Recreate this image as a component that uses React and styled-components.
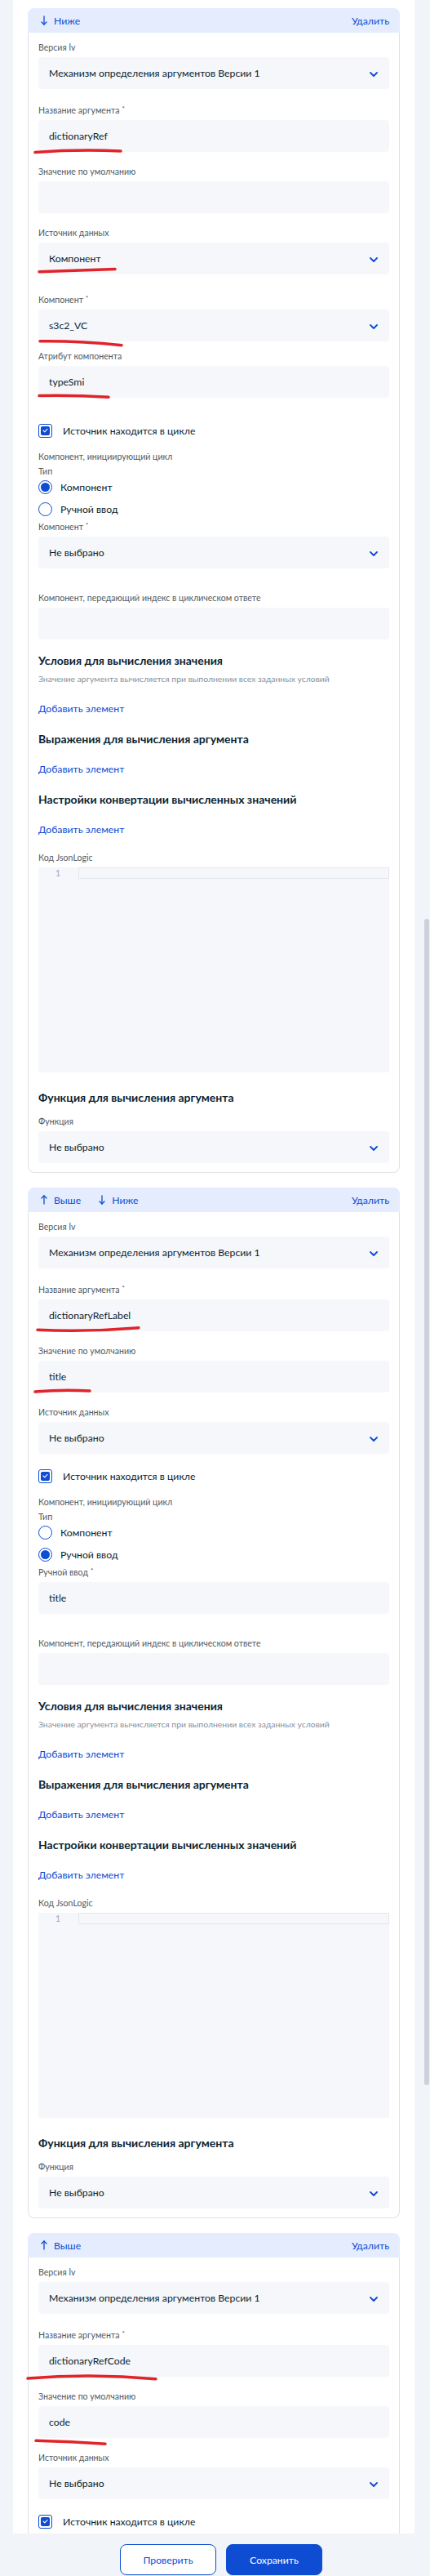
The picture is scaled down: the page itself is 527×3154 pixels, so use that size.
import React from 'react';
import styled, { createGlobalStyle } from 'styled-components';

const GlobalStyle = createGlobalStyle`
  * { box-sizing: border-box; }
  body {
    margin: 0;
    background: #f1f4f9;
    font-family: Lato, 'Noto Sans', sans-serif;
    color: #0b1f33;
  }
`;

const BLUE = '#0d4cd3';

const Page = styled.div`
  width: 527px;
`;

const Main = styled.main`
  position: relative;
  height: 3102px;
  overflow: hidden;
  padding-left: 16px;
`;

const ScrollThumb = styled.div`
  position: absolute;
  left: 520px;
  top: 1125px;
  width: 6px;
  height: 1428px;
  border-radius: 3px;
  background: #cdd1db;
`;

const Panel = styled.div`
  width: 492px;
  min-height: 100%;
  background: #fff;
  padding: 10px 18px 0;
  display: flex;
  flex-direction: column;
  gap: 18px;
`;

const Card = styled.section`
  display: flex;
  flex-direction: column;
`;

const CardHeader = styled.div`
  height: 30px;
  background: #e4ecfd;
  border-radius: 8px 8px 0 0;
  display: flex;
  align-items: center;
  padding: 0 13px 0 16px;
  gap: 22px;
  font-size: 12.25px;
  color: ${BLUE};
`;

const HeaderBtn = styled.span`
  display: flex;
  align-items: center;
  gap: 8px;
  margin-left: ${p => (p.$right ? 'auto' : '0')};
`;

const CardBody = styled.div`
  border: 1px solid #dfe2e7;
  border-top: none;
  border-radius: 0 0 8px 8px;
  padding: 10px 12px ${p => (p.$cut ? 60 : 11)}px;
`;

const Field = styled.div`
  margin-top: ${p => p.$mt}px;
`;

const Label = styled.div`
  font-size: 10.6px;
  line-height: 16px;
  color: #535b63;
  margin-top: ${p => p.$mt || 0}px;
`;

const Req = styled.span`
  font-size: 8px;
  vertical-align: 3px;
  margin-left: 3px;
`;

const BoxWrap = styled.div`
  position: relative;
  margin-top: 4px;
`;

const Box = styled.div`
  height: 39px;
  border-radius: 4px;
  background: #f5f7fa;
  display: flex;
  align-items: center;
  justify-content: space-between;
  padding: 0 14px 0 13px;
  font-size: 12.25px;
  color: #0b1f33;
`;

const Chevron = styled.svg`
  width: 10px;
  height: 6px;
  margin-top: 2px;
`;

const Mark = styled.svg`
  position: absolute;
  left: ${p => p.$x}px;
  top: ${p => 34 + p.$y}px;
  width: ${p => p.$w}px;
  height: 10px;
  overflow: visible;
  pointer-events: none;
`;

const CheckRow = styled.label`
  margin-top: ${p => p.$mt}px;
  height: 20px;
  display: flex;
  align-items: center;
  gap: 13px;
  font-size: 12.25px;
`;

const CheckBox = styled.span`
  width: 17px;
  height: 17px;
  border: 1.5px solid ${BLUE};
  border-radius: 3px;
  display: flex;
  align-items: center;
  justify-content: center;
`;

const CheckFill = styled.span`
  width: 11px;
  height: 11px;
  border-radius: 2px;
  background: ${BLUE};
  display: flex;
  align-items: center;
  justify-content: center;
`;

const RadioRow = styled.label`
  margin-top: ${p => p.$mt}px;
  height: 20px;
  display: flex;
  align-items: center;
  gap: 10px;
  font-size: 12.25px;
`;

const RadioDot = styled.span`
  width: 17px;
  height: 17px;
  border-radius: 50%;
  border: 1.5px solid ${BLUE};
  display: flex;
  align-items: center;
  justify-content: center;
  &::after {
    content: '';
    width: 11px;
    height: 11px;
    border-radius: 50%;
    background: ${p => (p.$on ? BLUE : 'transparent')};
  }
`;

const SectionTitle = styled.h3`
  margin: ${p => p.$mt}px 0 0;
  font-size: 14px;
  line-height: 20px;
  font-weight: 700;
  color: #0b1f33;
`;

const Hint = styled.p`
  margin: 4px 0 0;
  font-size: 10.4px;
  line-height: 16px;
  color: #86909c;
`;

const AddLink = styled.a`
  display: block;
  margin-top: ${p => p.$mt}px;
  font-size: 12.25px;
  line-height: 20px;
  color: ${BLUE};
  text-decoration: none;
`;

const Editor = styled.div`
  margin-top: 4px;
  height: 251px;
  background: #f5f7fa;
  display: grid;
  grid-template-columns: 49px 1fr;
  align-content: start;
`;

const Gutter = styled.div`
  font-size: 10.5px;
  line-height: 14px;
  color: #a79fc4;
  text-align: right;
  padding-right: 22px;
`;

const ActiveLine = styled.div`
  height: 14px;
  border: 1px solid #e3e6ec;
`;

const Footer = styled.footer`
  height: 52px;
  padding: 13px 0 0 15px;
  display: flex;
  justify-content: center;
  gap: 12px;
`;

const Button = styled.button`
  width: 118px;
  height: 38px;
  border-radius: 8px;
  border: 1px solid ${BLUE};
  background: ${p => (p.$primary ? BLUE : '#fff')};
  color: ${p => (p.$primary ? '#fff' : BLUE)};
  font-family: Lato, sans-serif;
  font-size: 12.25px;
`;

function Arrow({ up }) {
  return (
    <svg width="8" height="12" viewBox="0 0 8 12" fill="none" stroke={BLUE} strokeWidth="1.3" strokeLinecap="round" strokeLinejoin="round">
      {up ? (
        <>
          <path d="M4 11V1" />
          <path d="M1 4l3-3 3 3" />
        </>
      ) : (
        <>
          <path d="M4 1v10" />
          <path d="M1 8l3 3 3-3" />
        </>
      )}
    </svg>
  );
}

function Scribble({ x, y, w, a, b, c }) {
  const ctrl = 2 * b - (a + c) / 2;
  return (
    <Mark $x={x} $y={y} $w={w} viewBox={`0 0 ${w} 10`}>
      <path
        d={`M2 ${5 + a} Q ${w / 2} ${5 + ctrl} ${w - 2} ${5 + c}`}
        fill="none"
        stroke="#e1232b"
        strokeWidth="3.5"
        strokeLinecap="round"
      />
    </Mark>
  );
}

function InputField({ label, req, value, select, mt = 16, mark }) {
  return (
    <Field $mt={mt}>
      <Label>
        {label}
        {req && <Req>*</Req>}
      </Label>
      <BoxWrap>
        <Box>
          <span>{value}</span>
          {select && (
            <Chevron viewBox="0 0 10 6" fill="none">
              <path d="M1 1l4 4 4-4" stroke={BLUE} strokeWidth="1.8" strokeLinecap="round" strokeLinejoin="round" />
            </Chevron>
          )}
        </Box>
        {mark && <Scribble {...mark} />}
      </BoxWrap>
    </Field>
  );
}

function LoopCheck({ mt }) {
  return (
    <CheckRow $mt={mt}>
      <CheckBox>
        <CheckFill>
          <svg width="7" height="6" viewBox="0 0 7 6" fill="none">
            <path d="M1 3l1.8 1.8L6 1.3" stroke="#fff" strokeWidth="1.1" strokeLinecap="round" strokeLinejoin="round" />
          </svg>
        </CheckFill>
      </CheckBox>
      Источник находится в цикле
    </CheckRow>
  );
}

function LoopType({ manual }) {
  return (
    <>
      <Label $mt={14}>Компонент, инициирующий цикл</Label>
      <Label $mt={2}>Тип</Label>
      <RadioRow $mt={1}>
        <RadioDot $on={!manual} />
        Компонент
      </RadioRow>
      <RadioRow $mt={7}>
        <RadioDot $on={manual} />
        Ручной ввод
      </RadioRow>
    </>
  );
}

function Calculation() {
  return (
    <>
      <InputField label="Компонент, передающий индекс в циклическом ответе" mt={28} />
      <SectionTitle $mt={16}>Условия для вычисления значения</SectionTitle>
      <Hint>Значение аргумента вычисляется при выполнении всех заданных условий</Hint>
      <AddLink $mt={19}>Добавить элемент</AddLink>
      <SectionTitle $mt={17}>Выражения для вычисления аргумента</SectionTitle>
      <AddLink $mt={17}>Добавить элемент</AddLink>
      <SectionTitle $mt={17}>Настройки конвертации вычисленных значений</SectionTitle>
      <AddLink $mt={17}>Добавить элемент</AddLink>
      <Label $mt={16}>Код JsonLogic</Label>
      <Editor>
        <Gutter>1</Gutter>
        <ActiveLine />
      </Editor>
      <SectionTitle $mt={21}>Функция для вычисления аргумента</SectionTitle>
      <InputField label="Функция" value="Не выбрано" select mt={11} />
    </>
  );
}

function Header({ up, down }) {
  return (
    <CardHeader>
      {up && (
        <HeaderBtn>
          <Arrow up />
          Выше
        </HeaderBtn>
      )}
      {down && (
        <HeaderBtn>
          <Arrow />
          Ниже
        </HeaderBtn>
      )}
      <HeaderBtn $right>Удалить</HeaderBtn>
    </CardHeader>
  );
}

const VERSION = 'Механизм определения аргументов Версии 1';

export default function App() {
  return (
    <Page>
      <GlobalStyle />
      <Main>
        <Panel>
          <Card>
            <Header down />
            <CardBody>
              <InputField label="Версия lv" value={VERSION} select mt={0} />
              <InputField label="Название аргумента" req value="dictionaryRef" mark={{ x: -6, y: -1, w: 109, a: 1.5, b: -0.8, c: 0 }} />
              <InputField label="Значение по умолчанию" />
              <InputField label="Источник данных" value="Компонент" select mark={{ x: -1, y: -5.5, w: 97, a: 1.7, b: 0, c: -1.5 }} />
              <InputField label="Компонент" req value="s3c2_VC" select mt={21} mark={{ x: 0, y: 1.5, w: 104, a: -2.2, b: -1.2, c: 2.8 }} />
              <InputField label="Атрибут компонента" value="typeSmi" mt={10} mark={{ x: -1, y: -2, w: 89, a: -0.5, b: -0.5, c: 1.2 }} />
              <LoopCheck mt={30} />
              <LoopType />
              <InputField label="Компонент" req value="Не выбрано" select mt={2} />
              <Calculation />
            </CardBody>
          </Card>

          <Card>
            <Header up down />
            <CardBody>
              <InputField label="Версия lv" value={VERSION} select mt={0} />
              <InputField label="Название аргумента" req value="dictionaryRefLabel" mark={{ x: -3, y: -2.5, w: 128, a: 0.3, b: 1, c: -2.3 }} />
              <InputField label="Значение по умолчанию" value="title" mark={{ x: -6, y: -2.5, w: 71, a: 1, b: -0.7, c: 0 }} />
              <InputField label="Источник данных" value="Не выбрано" select />
              <LoopCheck mt={17} />
              <LoopType manual />
              <InputField label="Ручной ввод" req value="title" mt={2} />
              <Calculation />
            </CardBody>
          </Card>

          <Card>
            <Header up />
            <CardBody $cut>
              <InputField label="Версия lv" value={VERSION} select mt={0} />
              <InputField label="Название аргумента" req value="dictionaryRefCode" mark={{ x: -15, y: 0.7, w: 161, a: 1, b: -2, c: 1.7 }} />
              <InputField label="Значение по умолчанию" value="code" mark={{ x: -5, y: 5, w: 89, a: -1.8, b: -0.2, c: 2.2 }} />
              <InputField label="Источник данных" value="Не выбрано" select />
              <LoopCheck mt={17} />
            </CardBody>
          </Card>
        </Panel>
        <ScrollThumb />
      </Main>
      <Footer>
        <Button>Проверить</Button>
        <Button $primary>Сохранить</Button>
      </Footer>
    </Page>
  );
}
